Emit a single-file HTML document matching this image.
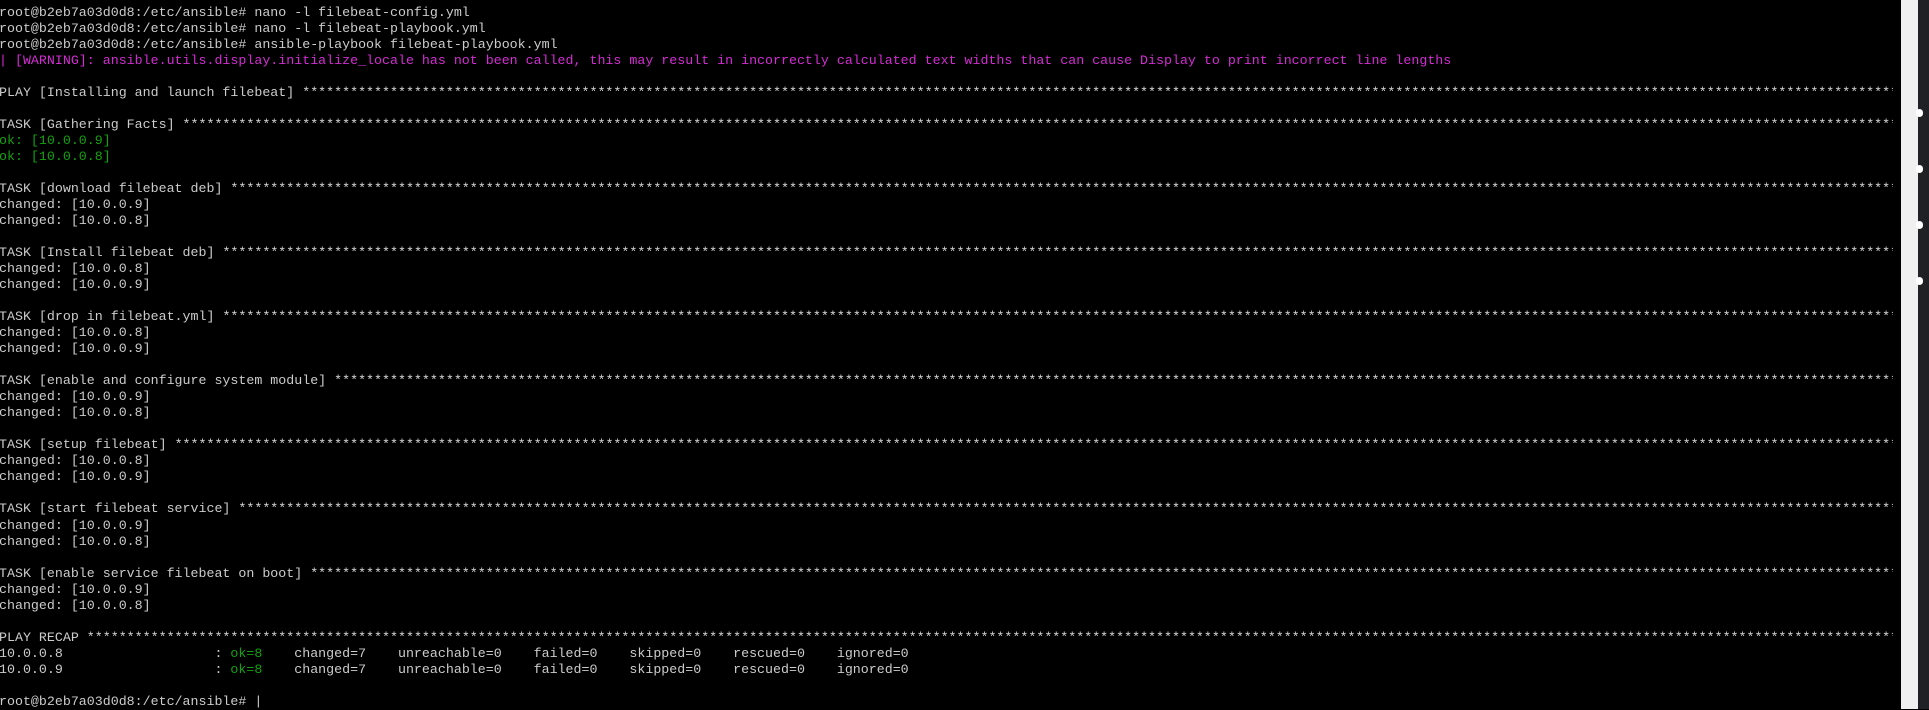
<!DOCTYPE html>
<html><head><meta charset="utf-8"><style>
html,body{margin:0;padding:0;background:#000;width:1929px;height:709px;overflow:hidden}
#t{position:absolute;left:-1px;top:5px;width:1894px;overflow:hidden;font-family:"Liberation Mono",monospace;font-size:13.3px;line-height:16.03px;color:#cccccc}
.l{white-space:pre;height:16.03px;overflow:hidden}
.m{color:#d42cd4}.g{color:#13a10e}.s{color:#d8d8d8}
#sb{position:absolute;left:1901px;top:0;width:17px;height:709px;background:#f0f0f0}
#dk{position:absolute;left:1918px;top:0;width:11px;height:709px;background:#202124}
.b{position:absolute;left:1916px;width:7px;height:8px;border-radius:4px;background:#fff}
</style></head><body>
<div id="t">
<div class="l">root@b2eb7a03d0d8:/etc/ansible# nano -l filebeat-config.yml</div>
<div class="l">root@b2eb7a03d0d8:/etc/ansible# nano -l filebeat-playbook.yml</div>
<div class="l">root@b2eb7a03d0d8:/etc/ansible# ansible-playbook filebeat-playbook.yml</div>
<div class="l m">| [WARNING]: ansible.utils.display.initialize_locale has not been called, this may result in incorrectly calculated text widths that can cause Display to print incorrect line lengths</div>
<div class="l"> </div>
<div class="l">PLAY [Installing and launch filebeat] <span class="s">S</span></div>
<div class="l"> </div>
<div class="l">TASK [Gathering Facts] <span class="s">S</span></div>
<div class="l g">ok: [10.0.0.9]</div>
<div class="l g">ok: [10.0.0.8]</div>
<div class="l"> </div>
<div class="l">TASK [download filebeat deb] <span class="s">S</span></div>
<div class="l">changed: [10.0.0.9]</div>
<div class="l">changed: [10.0.0.8]</div>
<div class="l"> </div>
<div class="l">TASK [Install filebeat deb] <span class="s">S</span></div>
<div class="l">changed: [10.0.0.8]</div>
<div class="l">changed: [10.0.0.9]</div>
<div class="l"> </div>
<div class="l">TASK [drop in filebeat.yml] <span class="s">S</span></div>
<div class="l">changed: [10.0.0.8]</div>
<div class="l">changed: [10.0.0.9]</div>
<div class="l"> </div>
<div class="l">TASK [enable and configure system module] <span class="s">S</span></div>
<div class="l">changed: [10.0.0.9]</div>
<div class="l">changed: [10.0.0.8]</div>
<div class="l"> </div>
<div class="l">TASK [setup filebeat] <span class="s">S</span></div>
<div class="l">changed: [10.0.0.8]</div>
<div class="l">changed: [10.0.0.9]</div>
<div class="l"> </div>
<div class="l">TASK [start filebeat service] <span class="s">S</span></div>
<div class="l">changed: [10.0.0.9]</div>
<div class="l">changed: [10.0.0.8]</div>
<div class="l"> </div>
<div class="l">TASK [enable service filebeat on boot] <span class="s">S</span></div>
<div class="l">changed: [10.0.0.9]</div>
<div class="l">changed: [10.0.0.8]</div>
<div class="l"> </div>
<div class="l">PLAY RECAP <span class="s">S</span></div>
<div class="l">10.0.0.8                   : <span class="g">ok=8</span>    changed=7    unreachable=0    failed=0    skipped=0    rescued=0    ignored=0</div>
<div class="l">10.0.0.9                   : <span class="g">ok=8</span>    changed=7    unreachable=0    failed=0    skipped=0    rescued=0    ignored=0</div>
<div class="l"> </div>
<div class="l">root@b2eb7a03d0d8:/etc/ansible# |</div>
</div>
<div id="sb"></div><div id="dk"></div>
<div class="b" style="top:109px"></div><div class="b" style="top:165px"></div><div class="b" style="top:221px"></div><div class="b" style="top:277px"></div>
<script>
var st="*".repeat(260);
document.querySelectorAll('.s').forEach(function(e){e.textContent=st;});
</script>
</body></html>
